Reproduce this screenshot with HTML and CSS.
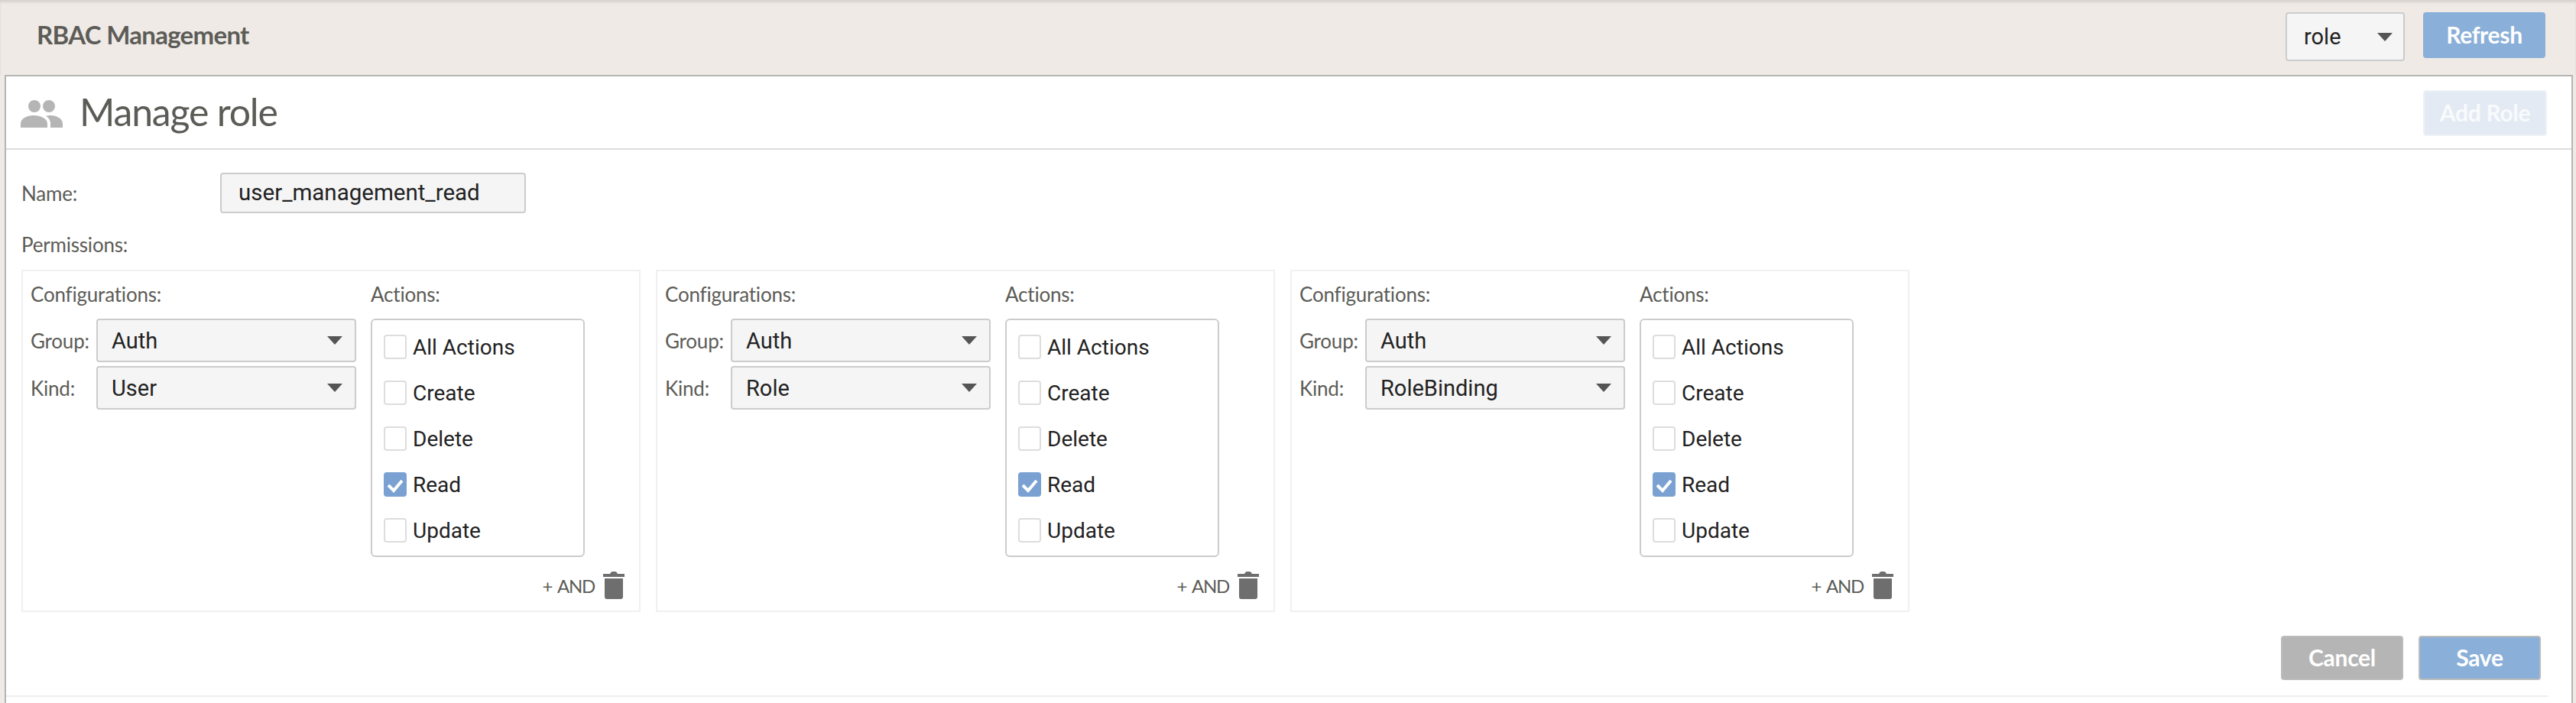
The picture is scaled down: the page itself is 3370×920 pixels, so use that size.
FILE: index.html
```html
<!DOCTYPE html>
<html lang="en">
<head>
    <meta charset="UTF-8">
    <meta name="viewport" content="width=device-width, initial-scale=1.0">
    <title>RBAC Management</title>
    <link rel="stylesheet" href="styles.css">
</head>
<body>
    <header class="topbar">
        <div class="topbar-title">RBAC Management</div>
        <div class="select select-top"><span>role</span><i class="caret"></i></div>
        <button class="btn btn-blue btn-refresh" type="button">Refresh</button>
    </header>

    <main class="panel">
        <div class="panel-head">
            <svg class="people" viewBox="0 0 56 36" width="56" height="36" aria-hidden="true">
                <circle cx="19" cy="8" r="8"/>
                <circle cx="38" cy="8" r="8"/>
                <path d="M1 36v-5c0-7 8-11 17-11s18 4 18 11v5z"/>
                <path d="M40 36v-5c0-4-2-8-6-10 2-1 4-1 6-1 8 0 16 4 16 11v5z"/>
            </svg>
            <h1 class="panel-title">Manage role</h1>
            <button class="btn btn-add" type="button">Add Role</button>
        </div>

        <div class="panel-body">
            <div class="name-row">
                <label class="label name-label">Name:</label>
                <div class="name-input">user_management_read</div>
            </div>
            <div class="label perm-label">Permissions:</div>

            <div class="cards">
                <section class="card">
                    <div class="card-cols">
                        <div class="config">
                            <div class="label col-title">Configurations:</div>
                            <div class="field"><span class="label field-label">Group:</span><div class="select"><span>Auth</span><i class="caret"></i></div></div>
                            <div class="field"><span class="label field-label">Kind:</span><div class="select"><span>User</span><i class="caret"></i></div></div>
                        </div>
                        <div class="actions">
                            <div class="label col-title">Actions:</div>
                            <div class="action-box">
                                <div class="action"><span class="check"></span>All Actions</div>
                                <div class="action"><span class="check"></span>Create</div>
                                <div class="action"><span class="check"></span>Delete</div>
                                <div class="action"><span class="check on"><svg viewBox="0 0 30 32" width="30" height="32"><path d="M6 17l7 7 11-13"/></svg></span>Read</div>
                                <div class="action"><span class="check"></span>Update</div>
                            </div>
                        </div>
                    </div>
                    <div class="card-foot">
                        <span class="add-and">+ AND</span>
                        <svg class="trash" viewBox="0 0 28 36" width="28" height="36" aria-hidden="true"><path d="M0 3h9c1-2 2-3 3-3h4c1 0 2 1 3 3h9v4H0zM2 9h24v24c0 2-1 3-3 3H5c-2 0-3-1-3-3z"/></svg>
                    </div>
                </section>

                <section class="card">
                    <div class="card-cols">
                        <div class="config">
                            <div class="label col-title">Configurations:</div>
                            <div class="field"><span class="label field-label">Group:</span><div class="select"><span>Auth</span><i class="caret"></i></div></div>
                            <div class="field"><span class="label field-label">Kind:</span><div class="select"><span>Role</span><i class="caret"></i></div></div>
                        </div>
                        <div class="actions">
                            <div class="label col-title">Actions:</div>
                            <div class="action-box">
                                <div class="action"><span class="check"></span>All Actions</div>
                                <div class="action"><span class="check"></span>Create</div>
                                <div class="action"><span class="check"></span>Delete</div>
                                <div class="action"><span class="check on"><svg viewBox="0 0 30 32" width="30" height="32"><path d="M6 17l7 7 11-13"/></svg></span>Read</div>
                                <div class="action"><span class="check"></span>Update</div>
                            </div>
                        </div>
                    </div>
                    <div class="card-foot">
                        <span class="add-and">+ AND</span>
                        <svg class="trash" viewBox="0 0 28 36" width="28" height="36" aria-hidden="true"><path d="M0 3h9c1-2 2-3 3-3h4c1 0 2 1 3 3h9v4H0zM2 9h24v24c0 2-1 3-3 3H5c-2 0-3-1-3-3z"/></svg>
                    </div>
                </section>

                <section class="card">
                    <div class="card-cols">
                        <div class="config">
                            <div class="label col-title">Configurations:</div>
                            <div class="field"><span class="label field-label">Group:</span><div class="select"><span>Auth</span><i class="caret"></i></div></div>
                            <div class="field"><span class="label field-label">Kind:</span><div class="select"><span>RoleBinding</span><i class="caret"></i></div></div>
                        </div>
                        <div class="actions">
                            <div class="label col-title">Actions:</div>
                            <div class="action-box">
                                <div class="action"><span class="check"></span>All Actions</div>
                                <div class="action"><span class="check"></span>Create</div>
                                <div class="action"><span class="check"></span>Delete</div>
                                <div class="action"><span class="check on"><svg viewBox="0 0 30 32" width="30" height="32"><path d="M6 17l7 7 11-13"/></svg></span>Read</div>
                                <div class="action"><span class="check"></span>Update</div>
                            </div>
                        </div>
                    </div>
                    <div class="card-foot">
                        <span class="add-and">+ AND</span>
                        <svg class="trash" viewBox="0 0 28 36" width="28" height="36" aria-hidden="true"><path d="M0 3h9c1-2 2-3 3-3h4c1 0 2 1 3 3h9v4H0zM2 9h24v24c0 2-1 3-3 3H5c-2 0-3-1-3-3z"/></svg>
                    </div>
                </section>
            </div>

            <div class="form-foot">
                <button class="btn btn-grey" type="button">Cancel</button>
                <button class="btn btn-blue btn-save" type="button">Save</button>
            </div>
        </div>
        <div class="panel-rule"></div>
    </main>
</body>
</html>
```

FILE: styles.css
```css
html, body { height: 100%; overflow: hidden; }
body { margin: 0; background: #efeae6; font-family: Lato, "Open Sans", sans-serif; color: #222; }

.topbar { display: flex; align-items: flex-start; height: 98px; padding: 16px 40px 0 48px; box-sizing: border-box; box-shadow: inset 0 3px 3px rgba(0, 0, 0, .1); }
.topbar-title { flex: 1; margin-top: 9px; font-size: 33px; line-height: 40px; font-weight: 700; letter-spacing: -.7px; color: #5c5c57; }

.select { display: flex; flex: 1; align-items: center; justify-content: space-between; box-sizing: border-box; height: 57px; padding: 0 16px 0 18px; background: #f5f5f5; border: 2px solid #ccc; border-radius: 4px; font-family: Roboto, sans-serif; font-size: 29px; }
.select-top { flex: none; width: 156px; height: 64px; padding: 0 14px 0 22px; margin-right: 24px; }
.caret { width: 0; height: 0; border-left: 10px solid transparent; border-right: 10px solid transparent; border-top: 11px solid #555; }

.btn { box-sizing: border-box; width: 160px; height: 58px; padding: 0 0 2px; border: 2px solid transparent; border-radius: 4px; color: #fff; font-family: Lato, sans-serif; font-size: 30px; font-weight: 700; letter-spacing: -.3px; }
.btn-blue { background: #8aafd9; }
.btn-grey { background: #b5b5b5; border-color: #bbb; }
.btn-refresh { height: 60px; border: 0; }
.btn-save { border-color: #bbb; }
.btn-add { width: 162px; height: 60px; margin-top: 2px; background: #e3eaf4; border-color: #eef1f6; color: #f8fafc; }

.panel { box-sizing: border-box; height: 822px; margin: 0 4px 0 6px; background: #fff; border: 2px solid #b5b5b5; border-bottom: 0; }
.panel-head { display: flex; align-items: flex-start; height: 96px; padding: 16px 32px 0 18px; box-sizing: border-box; border-bottom: 2px solid #ddd; }
.people { margin-top: 15px; margin-right: 22px; fill: #b5b5b5; }
.panel-title { flex: 1; margin: 0; font-size: 50px; line-height: 60px; font-weight: 400; letter-spacing: -1.2px; color: #5c5c57; }

.panel-body { padding: 30px 0 0 20px; }
.label { font-size: 26px; letter-spacing: -.2px; color: #5c5c57; }
.name-row { display: flex; align-items: center; }
.name-label { width: 260px; }
.name-input { box-sizing: border-box; width: 400px; height: 53px; padding-left: 22px; background: #f5f5f5; border: 2px solid #ccc; border-radius: 4px; font-family: Roboto, sans-serif; font-size: 29.5px; line-height: 49px; }
.perm-label { margin-top: 25px; line-height: 32px; }

.cards { display: flex; gap: 20px; margin-top: 17px; }
.card { box-sizing: border-box; width: 810px; height: 448px; padding: 14px 0 0 10px; border: 2px solid #f0f0f0; }
.card-cols { display: flex; }
.config { width: 426px; margin-right: 19px; }
.col-title { height: 48px; line-height: 32px; }
.field { display: flex; align-items: center; margin-bottom: 5px; }
.field-label { width: 86px; }
.action-box { box-sizing: border-box; width: 280px; height: 312px; padding: 19px 0 0 15px; border: 2px solid #ccc; border-radius: 6px; }
.action { display: flex; align-items: center; height: 32px; margin-bottom: 28px; font-family: Roboto, sans-serif; font-size: 28px; }
.check { flex: none; box-sizing: border-box; width: 30px; height: 32px; margin-right: 8px; background: #fff; border: 2px solid #ddd; border-radius: 4px; }
.check.on { background: #7aa1d2; border: 0; }
.check svg { display: block; fill: none; stroke: #fff; stroke-width: 4; }

.card-foot { display: flex; align-items: center; justify-content: flex-end; padding: 19px 19px 0 0; }
.add-and { margin-right: 11px; font-size: 24px; letter-spacing: -1.3px; word-spacing: 3px; color: #5c5c57; }
.trash { fill: #6e6e6e; }

.form-foot { display: flex; justify-content: flex-end; gap: 20px; margin-top: 31px; padding-right: 40px; }
.panel-rule { height: 2px; margin: 20px 30px 0 0; background: #eee; }
```
